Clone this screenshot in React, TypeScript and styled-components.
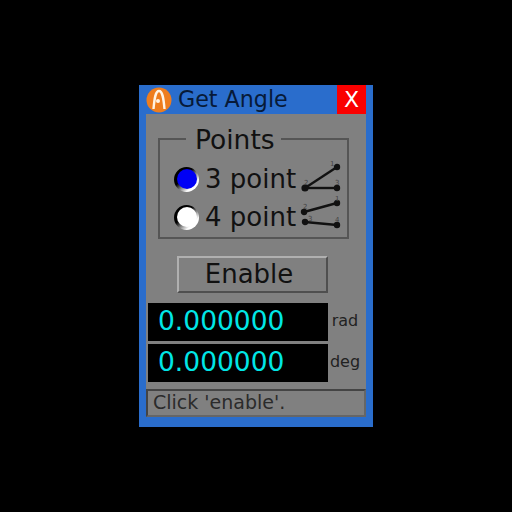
import styled, { createGlobalStyle } from "styled-components";

const GlobalStyle = createGlobalStyle`
  html, body {
    margin: 0;
    height: 100%;
    background: #000;
  }
  #root {
    height: 100%;
  }
`;

const Page = styled.div`
  display: flex;
  align-items: center;
  justify-content: center;
  height: 512px;
  font-family: "DejaVu Sans", sans-serif;
`;

const Window = styled.div`
  display: flex;
  flex-direction: column;
  box-sizing: border-box;
  width: 234px;
  height: 342px;
  padding: 0 7px 10px;
  background: #2a6dcc;
`;

const TitleBar = styled.div`
  display: flex;
  align-items: center;
  height: 29px;
  flex: none;
`;

const TitleText = styled.span`
  flex: 1;
  margin-left: 6px;
  font-size: 22.2px;
  line-height: 31px;
  color: #071a38;
`;

const CloseButton = styled.div`
  width: 29px;
  height: 29px;
  background: #fa0000;
  color: #fff;
  font-size: 22px;
  line-height: 29px;
  text-align: center;
`;

const Body = styled.div`
  flex: 1;
  display: flex;
  flex-direction: column;
  background: #808080;
`;

const PointsBox = styled.fieldset`
  box-sizing: border-box;
  width: 191px;
  height: 114px;
  margin: 11px 0 0 12px;
  padding: 7px 0 0;
  border: 2px solid #555;
`;

const PointsLegend = styled.legend`
  margin-left: 26px;
  padding: 2px 6px 0 9px;
  font-size: 26.5px;
  line-height: 26px;
  color: #111;
`;

const OptionRow = styled.div`
  display: flex;
  align-items: center;
  height: 38px;
  padding-left: 14px;
`;

const Radio = styled.span<{ $fill: string }>`
  display: flex;
  align-items: center;
  justify-content: center;
  width: 25px;
  height: 25px;
  flex: none;
  border-radius: 50%;
  background: linear-gradient(135deg, #000 40%, #777 55%, #fff 75%);

  &::after {
    content: "";
    width: 20px;
    height: 20px;
    border-radius: 50%;
    background: ${(props) => props.$fill};
  }
`;

const OptionLabel = styled.span`
  margin-left: 6px;
  width: 97px;
  font-size: 26px;
  line-height: 38px;
  white-space: nowrap;
  color: #111;
`;

const Diagram = styled.svg`
  width: 42px;
  height: 34px;
  flex: none;
  overflow: visible;
`;

const EnableButton = styled.div`
  box-sizing: border-box;
  width: 151px;
  height: 37px;
  margin: 17px 0 0 31px;
  padding-right: 7px;
  border: 2px solid;
  border-color: #b0b0b0 #4f4f4f #4f4f4f #b0b0b0;
  background: #808080;
  font-size: 26px;
  line-height: 32px;
  text-align: center;
  color: #111;
`;

const ReadoutList = styled.div`
  display: flex;
  flex-direction: column;
  gap: 3px;
  margin: 10px 0 0 2px;
`;

const ReadoutRow = styled.div`
  display: flex;
  align-items: center;
`;

const Readout = styled.div`
  box-sizing: border-box;
  width: 180px;
  height: 38px;
  padding-left: 10px;
  background: #000;
  color: #00e6e6;
  font-size: 26.5px;
  line-height: 36px;
`;

const Unit = styled.span`
  flex: 1;
  padding: 0 4px 3px 0;
  text-align: center;
  font-size: 16px;
  color: #222;
`;

const StatusBar = styled.div`
  box-sizing: border-box;
  height: 28px;
  margin-top: 7px;
  padding-left: 5px;
  border: 2px solid;
  border-color: #444 #666 #666 #444;
  font-size: 19px;
  line-height: 22px;
  color: #2b2b2b;
`;

function AppLogo() {
  return (
    <svg width="26" height="26" viewBox="0 0 26 26">
      <circle cx="13" cy="13" r="12.5" fill="#ee7d1e" />
      <path d="M7.5 22 C8.5 11 9.5 4 13 4 C16.5 4 17.5 11 18.5 22" fill="none" stroke="#fff3e4" strokeWidth="2.4" />
      <circle cx="12" cy="14" r="2" fill="#fff3e4" />
    </svg>
  );
}

function ThreePointDiagram() {
  return (
    <Diagram viewBox="0 0 42 34">
      <g stroke="#111" strokeWidth="2.4" fill="#111">
        <line x1="3" y1="26" x2="35" y2="5" />
        <line x1="3" y1="26" x2="35" y2="26" />
        <circle cx="35" cy="5" r="2" />
        <circle cx="3" cy="26" r="2.4" />
        <circle cx="35" cy="26" r="2" />
      </g>
      <g fill="#444" fontSize="7">
        <text x="28" y="4">1</text>
        <text x="2" y="23">2</text>
        <text x="33" y="23">3</text>
      </g>
    </Diagram>
  );
}

function FourPointDiagram() {
  return (
    <Diagram viewBox="0 0 42 34">
      <g stroke="#111" strokeWidth="2.4" fill="#111">
        <line x1="2" y1="12" x2="35" y2="3" />
        <line x1="3" y1="22" x2="35" y2="25" />
        <circle cx="35" cy="3" r="2" />
        <circle cx="2" cy="12" r="2" />
        <circle cx="3" cy="22" r="2" />
        <circle cx="35" cy="25" r="2" />
      </g>
      <g fill="#444" fontSize="7">
        <text x="33" y="1">1</text>
        <text x="1" y="9">2</text>
        <text x="6" y="21">3</text>
        <text x="33" y="22">4</text>
      </g>
    </Diagram>
  );
}

export default function App() {
  return (
    <>
      <GlobalStyle />
      <Page>
        <Window>
          <TitleBar>
            <AppLogo />
            <TitleText>Get Angle</TitleText>
            <CloseButton>X</CloseButton>
          </TitleBar>
          <Body>
            <PointsBox>
              <PointsLegend>Points</PointsLegend>
              <OptionRow>
                <Radio $fill="#0000f5" />
                <OptionLabel>3 point</OptionLabel>
                <ThreePointDiagram />
              </OptionRow>
              <OptionRow>
                <Radio $fill="#fff" />
                <OptionLabel>4 point</OptionLabel>
                <FourPointDiagram />
              </OptionRow>
            </PointsBox>
            <EnableButton>Enable</EnableButton>
            <ReadoutList>
              <ReadoutRow>
                <Readout>0.000000</Readout>
                <Unit>rad</Unit>
              </ReadoutRow>
              <ReadoutRow>
                <Readout>0.000000</Readout>
                <Unit>deg</Unit>
              </ReadoutRow>
            </ReadoutList>
            <StatusBar>Click 'enable'.</StatusBar>
          </Body>
        </Window>
      </Page>
    </>
  );
}
